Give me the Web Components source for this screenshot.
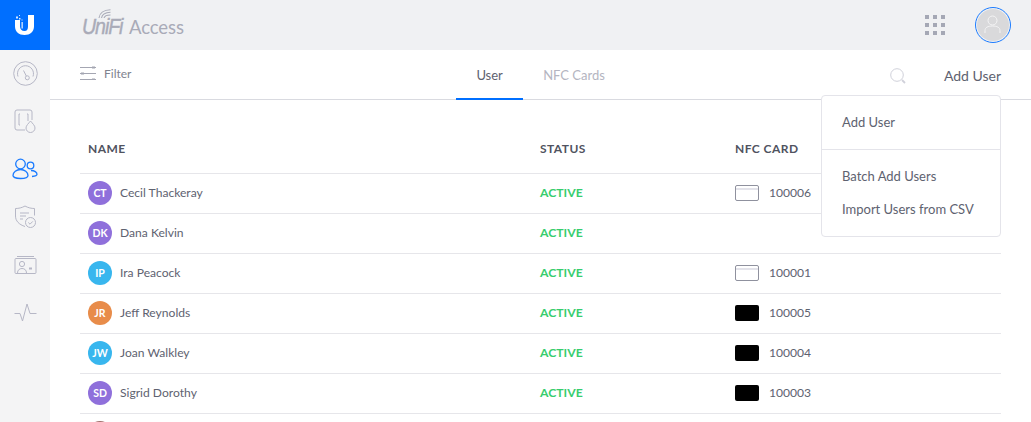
<!DOCTYPE html>
<html>
<head>
<meta charset="utf-8">
<title>UniFi Access</title>
<style>
    html, body {
        margin: 0;
        height: 100%;
        overflow: hidden;
        background: #fff;
        font-family: Lato, "Liberation Sans", sans-serif;
    }
</style>
</head>
<body>
<app-shell>
    <side-nav slot="nav"></side-nav>
    <top-bar slot="top"></top-bar>
    <tool-bar slot="tools"></tool-bar>
    <user-table slot="main"></user-table>
    <add-menu slot="menu"></add-menu>
</app-shell>

<script>
const usersData = [
    { initials: 'CT', name: 'Cecil Thackeray', color: '#8f70db', status: 'ACTIVE', card: 'light', number: '100006' },
    { initials: 'DK', name: 'Dana Kelvin', color: '#8f70db', status: 'ACTIVE', card: null, number: '' },
    { initials: 'IP', name: 'Ira Peacock', color: '#38b6ee', status: 'ACTIVE', card: 'light', number: '100001' },
    { initials: 'JR', name: 'Jeff Reynolds', color: '#e88c4a', status: 'ACTIVE', card: 'dark', number: '100005' },
    { initials: 'JW', name: 'Joan Walkley', color: '#38b6ee', status: 'ACTIVE', card: 'dark', number: '100004' },
    { initials: 'SD', name: 'Sigrid Dorothy', color: '#8f70db', status: 'ACTIVE', card: 'dark', number: '100003' },
    // only the top edge of this avatar is on screen
    { initials: '', name: '', color: '#a0706c', status: '', card: null, number: '' },
];

class AppShell extends HTMLElement {
    constructor() {
        super();
        this.attachShadow({ mode: 'open' });
        this.shadowRoot.innerHTML = `
            <style>
                :host {
                    display: grid;
                    grid-template-columns: 50px 1fr;
                    height: 422px;
                    position: relative;
                    overflow: hidden;
                }
                .content {
                    display: flex;
                    flex-direction: column;
                    min-width: 0;
                }
            </style>
            <slot name="nav"></slot>
            <div class="content">
                <slot name="top"></slot>
                <slot name="tools"></slot>
                <slot name="main"></slot>
            </div>
            <slot name="menu"></slot>
        `;
    }
}

class SideNav extends HTMLElement {
    constructor() {
        super();
        this.attachShadow({ mode: 'open' });
        this.shadowRoot.innerHTML = `
            <style>
                :host {
                    display: flex;
                    flex-direction: column;
                    background: #f4f4f5;
                    height: 422px;
                }
                .logo {
                    height: 50px;
                    background: #006fff;
                    display: flex;
                    align-items: center;
                    justify-content: center;
                }
                .item {
                    height: 48px;
                    display: flex;
                    align-items: center;
                    justify-content: center;
                }
                svg { display: block; fill: none; stroke: #b6b7c6; stroke-width: 1; }
                .on svg { stroke: #1a7bff; stroke-width: 1.3; }
            </style>
            <div class="logo">
                <svg width="20" height="20" viewBox="0 0 20 20" style="stroke:none">
                    <path fill="#fff" d="M13 0h6v11.500c0 5.200-4 8.500-9.500 8.500S0 16.700 0 11.500V5h5v6.500c0 2.500 1.800 4.500 4.500 4.500s3.500-2 3.500-4.500z"/>
                    <path fill="#fff" d="M1 1.500h2v2H1zM4 0h1v1H4zM4 3h1.500v1.500H4zM6.500 4.500h1v1h-1zM6.500 7h1.300v6.500H6.500z" opacity=".85"/>
                </svg>
            </div>
            <div class="item" style="height:46px">
                <svg width="25" height="25" viewBox="0 0 25 25">
                    <circle cx="12.500" cy="12.500" r="11.800"/>
                    <path d="M5 15.500A8 8 0 1 1 20 15.500"/>
                    <path d="M10.500 9.500l2.800 5.500"/>
                    <circle cx="14.300" cy="16.800" r="2"/>
                </svg>
            </div>
            <div class="item" style="height:50px">
                <svg width="23" height="24" viewBox="0 0 23 24">
                    <path d="M11 21H3a2 2 0 0 1-2-2V3a2 2 0 0 1 2-2h13a2 2 0 0 1 2 2v8"/>
                    <path d="M6 5H5v11h1M13 5h1v7"/>
                    <path d="M16.500 12c2 2.500 4.500 4.500 4.500 7a4.500 4.500 0 0 1-9 0c0-2.500 2.500-4.500 4.500-7z"/>
                </svg>
            </div>
            <div class="item on" style="height:46px">
                <svg width="26" height="22" viewBox="0 0 26 22">
                    <circle cx="8.500" cy="6" r="4.800"/>
                    <path d="M1 17.500c0-3.500 3.500-6 7.500-6s7.500 2.500 7.500 6c0 1.800-3.500 3-7.500 3s-7.500-1.200-7.500-3z"/>
                    <circle cx="18.500" cy="7.500" r="3.300"/>
                    <path d="M19 12.500c3.500 0 6 1.800 6 3.800 0 1.300-2 2-5 2.200"/>
                </svg>
            </div>
            <div class="item" style="height:50px">
                <svg width="23" height="24" viewBox="0 0 23 24">
                    <path d="M11 21.500C5 19.500 1.500 16 1.500 11V3.500C4.500 3.500 8 2.800 11 1c3 1.800 6.500 2.500 9.500 2.500v7"/>
                    <path d="M6 8h9M6 11h6M6 14h3"/>
                    <circle cx="16.500" cy="17.500" r="5"/>
                    <path d="M14.300 17.500l1.700 1.700 2.800-2.800"/>
                </svg>
            </div>
            <div class="item" style="height:46px">
                <svg width="23" height="20" viewBox="0 0 23 20">
                    <path d="M3 1.500h17"/>
                    <rect x="1" y="3.500" width="21" height="15" rx="1"/>
                    <circle cx="8" cy="9" r="2.600"/>
                    <path d="M3.500 18c0-3 2-4.500 4.500-4.500s4.500 1.500 4.500 4.500"/>
                    <path d="M15 13.500h3" stroke-width="2"/>
                </svg>
            </div>
            <div class="item" style="height:50px">
                <svg width="23" height="22" viewBox="0 0 23 22">
                    <path d="M0.500 11.500H6l2.500 7.500 4.500-17 3 9.500h6.500"/>
                </svg>
            </div>
        `;
    }
}

class TopBar extends HTMLElement {
    constructor() {
        super();
        this.attachShadow({ mode: 'open' });
        this.shadowRoot.innerHTML = `
            <style>
                :host {
                    display: flex;
                    align-items: center;
                    height: 50px;
                    background: #f0f1f3;
                    flex: none;
                    padding: 0 20px 0 32px;
                }
                .brand {
                    position: relative;
                    display: flex;
                    align-items: baseline;
                    color: #a9abb8;
                    margin-top: 4px;
                }
                .unifi {
                    display: inline-block;
                    font: italic 400 22px "Liberation Sans", sans-serif;
                    -webkit-text-stroke: .4px #a9abb8;
                    letter-spacing: -1.200px;
                    transform: scaleX(.89);
                    transform-origin: left;
                    width: 47px;
                }
                .access { font-size: 18.500px; letter-spacing: -0.100px; }
                .arcs { position: absolute; left: 16px; top: -5px; }
                .grid {
                    margin-left: auto;
                    display: grid;
                    grid-template-columns: repeat(3, 4px);
                    gap: 4px;
                    margin-right: 30px;
                    margin-top: -1px;
                }
                .grid i { width: 4px; height: 4px; background: #a5a8b5; }
                .avatar {
                    width: 36px;
                    height: 36px;
                    box-sizing: border-box;
                    border-radius: 50%;
                    border: 1px solid #1a7bff;
                    padding: 1px;
                    display: flex;
                }
                .avatar div {
                    flex: 1;
                    border-radius: 50%;
                    background: #d9d9db;
                    display: flex;
                    align-items: center;
                    justify-content: center;
                }
            </style>
            <div class="brand">
                <svg class="arcs" width="13" height="9" viewBox="0 0 13 9" fill="none" stroke="#a9abb8" stroke-width="1.100">
                    <path d="M1 9C1.500 4.500 5.500 1 12.500 .8M3.500 9C4 6 7 3.500 12.500 3.300M6 9c.5-1.800 2.500-3 6.500-3"/>
                </svg>
                <span class="unifi">UniFi</span>
                <span class="access">Access</span>
            </div>
            <div class="grid">
                <i></i><i></i><i></i><i></i><i></i><i></i><i></i><i></i><i></i>
            </div>
            <div class="avatar"><div>
                <svg width="24" height="24" viewBox="0 0 24 24" fill="none" stroke="#f4f4f5" stroke-width="1">
                    <circle cx="11.500" cy="7.500" r="4.500"/>
                    <path d="M4 20v-2.500c0-3 3-4.500 7.500-4.500s7.500 1.500 7.500 4.500V20"/>
                </svg>
            </div></div>
        `;
    }
}

class ToolBar extends HTMLElement {
    constructor() {
        super();
        this.attachShadow({ mode: 'open' });
        this.shadowRoot.innerHTML = `
            <style>
                :host {
                    display: grid;
                    grid-template-columns: 1fr auto 1fr;
                    height: 50px;
                    box-sizing: border-box;
                    border-bottom: 1px solid #d9dae0;
                    flex: none;
                    padding: 0 30px;
                    font-size: 14px;
                    color: #5e6270;
                }
                .filter {
                    display: flex;
                    align-items: center;
                    gap: 8px;
                    font-size: 12px;
                    color: #80838f;
                    height: 46px;
                }
                .tabs { display: flex; margin-left: -20px; font-size: 13px; }
                .tab {
                    width: 67px;
                    box-sizing: border-box;
                    height: 50px;
                    line-height: 50px;
                    text-align: center;
                    border-bottom: 2px solid transparent;
                    color: #5e6270;
                }
                .tab.on { border-bottom-color: #006fff; }
                .tab.off { width: auto; margin-left: 20px; color: #b4b5c1; }
                .right {
                    display: flex;
                    align-items: center;
                    justify-content: flex-end;
                    gap: 38px;
                    height: 51px;
                }
            </style>
            <div class="filter">
                <svg width="16" height="14" viewBox="0 0 16 14" fill="none" stroke="#a4a6b2">
                    <path d="M0 1.500h16M0 7.500h16M0 13.500h16"/>
                    <path d="M12 .5h3v2h-3zM1 6.500h3v2H1zM12 12.500h3v2h-3z" fill="#a4a6b2" stroke="none"/>
                </svg>
                <span>Filter</span>
            </div>
            <div class="tabs">
                <div class="tab on">User</div>
                <div class="tab off">NFC Cards</div>
            </div>
            <div class="right">
                <svg width="16" height="16" viewBox="0 0 16 16" fill="none" stroke="#d0d1da" stroke-width="1">
                    <circle cx="7" cy="7" r="6.300"/>
                    <path d="M12 12l3 3" stroke-width="1.800"/>
                </svg>
                <span>Add User</span>
            </div>
        `;
    }
}

class UserRow extends HTMLElement {
    constructor() {
        super();
        this.attachShadow({ mode: 'open' });
        this.shadowRoot.innerHTML = `
            <style>
                :host {
                    display: grid;
                    grid-template-columns: 452px 195px 1fr;
                    align-items: center;
                    height: 40px;
                    box-sizing: border-box;
                    border-bottom: 1px solid #e6e6ea;
                    padding: 0 8px 1px;
                    font-size: 12.100px;
                    color: #5e6270;
                }
                .name { display: flex; align-items: center; gap: 8px; }
                .badge {
                    width: 24px;
                    height: 24px;
                    border-radius: 50%;
                    color: #fff;
                    font-size: 10.500px;
                    font-weight: 700;
                    line-height: 25px;
                    text-align: center;
                }
                .label, .number { margin-bottom: 2px; }
                .status { color: #37cd6e; font-weight: 700; font-size: 12.200px; margin-bottom: 2px; }
                .card { display: flex; align-items: center; gap: 10px; }
                .chip {
                    width: 24px;
                    height: 16px;
                    box-sizing: border-box;
                    border-radius: 2px;
                }
                .chip.light {
                    border: 1px solid #8f919e;
                    background: linear-gradient(#fff 2px, #e3e3ea 2px, #e3e3ea 4px, #fff 4px);
                }
                .chip.dark { background: #000; }
            </style>
            <div class="name"><span class="badge"></span><span class="label"></span></div>
            <div class="status"></div>
            <div class="card"></div>
        `;
    }

    connectedCallback() {
        const badge = this.shadowRoot.querySelector('.badge');
        badge.textContent = this.getAttribute('initials');
        badge.style.background = this.getAttribute('color');
        this.shadowRoot.querySelector('.label').textContent = this.getAttribute('name');
        this.shadowRoot.querySelector('.status').textContent = this.getAttribute('status');

        const type = this.getAttribute('card');
        if (type) {
            const chip = document.createElement('span');
            chip.className = 'chip ' + type;
            const number = document.createElement('span');
            number.className = 'number';
            number.textContent = this.getAttribute('number');
            this.shadowRoot.querySelector('.card').append(chip, number);
        }
    }
}

class UserTable extends HTMLElement {
    constructor() {
        super();
        this.attachShadow({ mode: 'open' });
        this.shadowRoot.innerHTML = `
            <style>
                :host {
                    display: block;
                    padding: 0 30px;
                    flex: 1;
                    min-height: 0;
                }
                .head {
                    display: grid;
                    grid-template-columns: 452px 195px 1fr;
                    align-items: center;
                    height: 74px;
                    padding: 23px 8px 0;
                    box-sizing: border-box;
                    border-bottom: 1px solid #e6e6ea;
                    font-size: 12px;
                    font-weight: 700;
                    letter-spacing: .45px;
                    color: #50535f;
                }
            </style>
            <div class="head"><div>NAME</div><div>STATUS</div><div>NFC CARD</div></div>
            <div id="rows"></div>
        `;
    }

    connectedCallback() {
        const rows = this.shadowRoot.querySelector('#rows');
        usersData.forEach(user => {
            const row = document.createElement('user-row');
            row.setAttribute('initials', user.initials);
            row.setAttribute('name', user.name);
            row.setAttribute('color', user.color);
            row.setAttribute('status', user.status);
            if (user.card) row.setAttribute('card', user.card);
            row.setAttribute('number', user.number);
            rows.appendChild(row);
        });
    }
}

class AddMenu extends HTMLElement {
    constructor() {
        super();
        this.attachShadow({ mode: 'open' });
        this.shadowRoot.innerHTML = `
            <style>
                :host {
                    position: absolute;
                    left: 821px;
                    top: 95px;
                    width: 180px;
                    height: 142px;
                    box-sizing: border-box;
                    background: #fff;
                    border: 1px solid #e4e4ea;
                    border-radius: 4px;
                    font-size: 13px;
                    color: #5e6270;
                }
                .group { padding: 0 20px; }
                .first { height: 54px; box-sizing: border-box; padding-bottom: 2px; display: flex; align-items: center; border-bottom: 1px solid #e4e4ea; }
                .item { height: 33px; display: flex; align-items: center; }
                .rest { padding-top: 9px; }
            </style>
            <div class="group first"><div class="item">Add User</div></div>
            <div class="group rest">
                <div class="item">Batch Add Users</div>
                <div class="item">Import Users from CSV</div>
            </div>
        `;
    }
}

customElements.define('app-shell', AppShell);
customElements.define('side-nav', SideNav);
customElements.define('top-bar', TopBar);
customElements.define('tool-bar', ToolBar);
customElements.define('user-row', UserRow);
customElements.define('user-table', UserTable);
customElements.define('add-menu', AddMenu);
</script>
</body>
</html>
